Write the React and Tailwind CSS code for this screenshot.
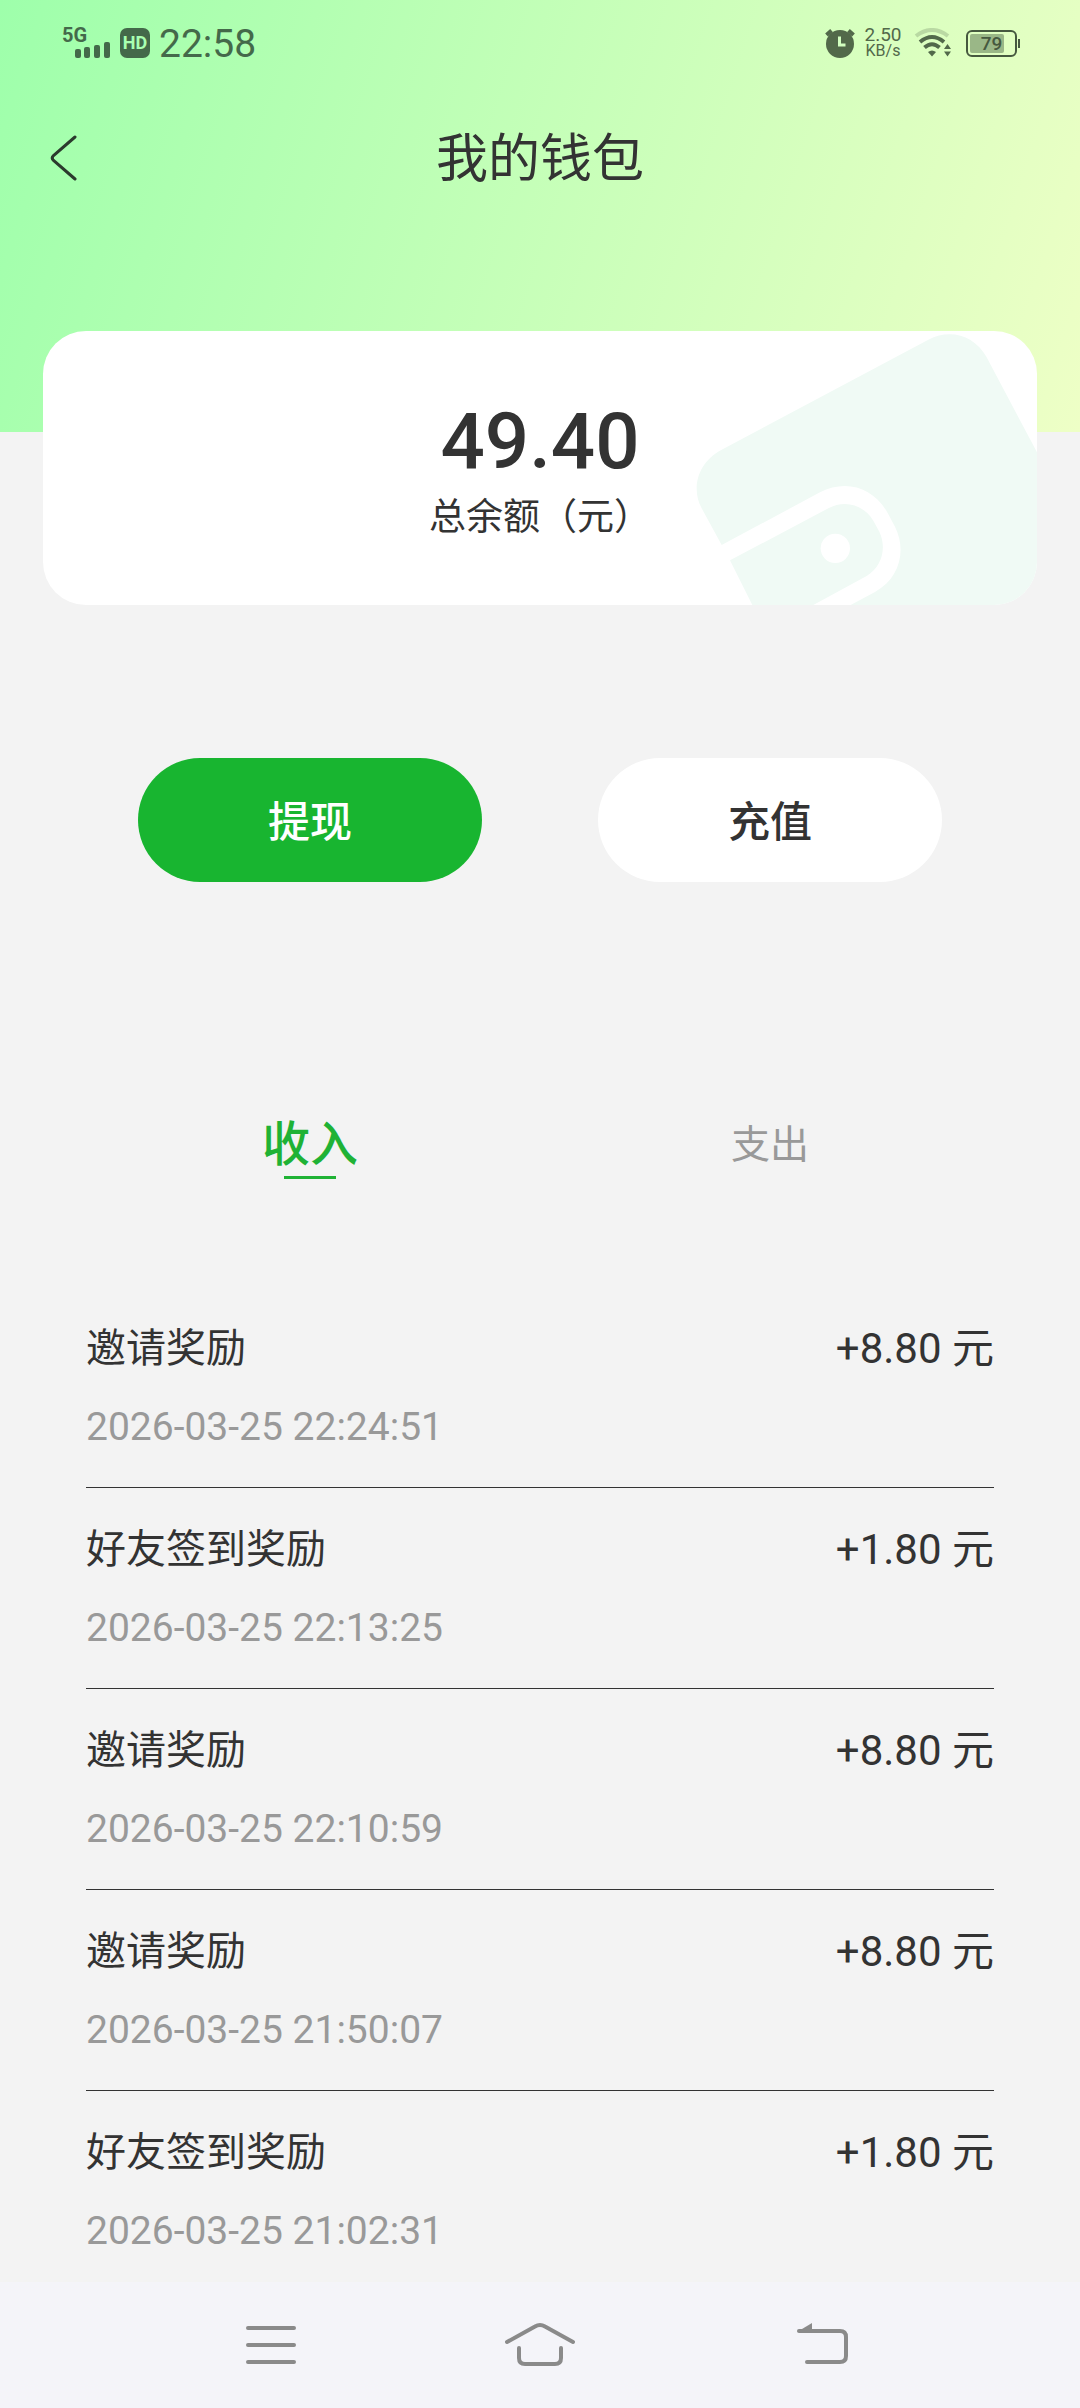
import { useState } from 'react'

const RECORDS = [
  { title: '邀请奖励', time: '2026-03-25 22:24:51', amount: '+8.80' },
  { title: '好友签到奖励', time: '2026-03-25 22:13:25', amount: '+1.80' },
  { title: '邀请奖励', time: '2026-03-25 22:10:59', amount: '+8.80' },
  { title: '邀请奖励', time: '2026-03-25 21:50:07', amount: '+8.80' },
  { title: '好友签到奖励', time: '2026-03-25 21:02:31', amount: '+1.80' },
]

const TABS = [
  { id: 'income', label: '收入' },
  { id: 'expense', label: '支出' },
]

function StatusBar() {
  return (
    <div className="flex h-[86px] items-center justify-between pl-[62px] pr-[60px] text-[#44694a]">
      <div className="flex items-center">
        <div className="flex h-[30px] w-12 flex-col">
          <span className="text-[20px] leading-[14px] font-bold">5G</span>
          <svg className="self-end" width="36" height="16" viewBox="0 0 36 16" fill="currentColor">
            <rect x="1" y="7" width="6" height="9" rx="2" />
            <rect x="10" y="5" width="6" height="11" rx="2" />
            <rect x="20" y="3" width="6" height="13" rx="2" />
            <rect x="30" y="0" width="6" height="16" rx="2" />
          </svg>
        </div>
        <span className="ml-[10px] flex h-[30px] w-[30px] items-center justify-center rounded-[7px] bg-[#44694a] text-[18px] leading-none font-bold text-[#a9ffb1]">
          HD
        </span>
        <span className="ml-[9px] pt-[2px] text-[39px] leading-[40px]">22:58</span>
      </div>

      <div className="flex items-center text-[#52694a]">
        <svg width="30" height="30" viewBox="0 0 30 30" fill="none">
          <circle cx="15" cy="16" r="14" fill="currentColor" />
          <path d="M1.500 7 6.500 2.500M28.500 7 23.500 2.500" stroke="currentColor" strokeWidth="4" />
          <path d="M14.500 8.500v8.500h6" stroke="#d2ffc0" strokeWidth="3" />
        </svg>
        <div className="ml-[8px] flex w-10 flex-col items-center">
          <span className="text-[19px] leading-[16px]">2.50</span>
          <span className="text-[16px] leading-[16px]">KB/s</span>
        </div>
        <svg className="ml-[11px]" width="38" height="30" viewBox="0 0 38 30" fill="none">
          <path d="M2 8Q18-4 34 8" stroke="currentColor" strokeOpacity=".25" strokeWidth="4" />
          <path d="M6 14Q18 4 30 14" stroke="currentColor" strokeWidth="4" />
          <path d="M10.500 19.500Q18 13 25.500 19.500" stroke="currentColor" strokeWidth="4" />
          <path d="M14 24Q18 21 22 24L18 28.500Z" fill="currentColor" />
          <path d="M30 21 33.500 16 37 21ZM30 23.500 33.500 28.500 37 23.500Z" fill="currentColor" />
        </svg>
        <div className="ml-[14px] flex items-center text-[#46593f]">
          <div className="relative flex h-[27px] w-[51px] items-center justify-center rounded-[6px] border-2 border-[#46593f]">
            <span className="absolute top-[2px] bottom-[2px] left-[2px] w-[34px] rounded-[2px] bg-[#9ab787]" />
            <span className="relative text-[19px] leading-none font-medium">79</span>
          </div>
          <span className="ml-px h-[9px] w-[2px] bg-[#46593f]" />
        </div>
      </div>
    </div>
  )
}

function TitleBar() {
  return (
    <div className="relative flex h-36 items-center justify-center">
      <button aria-label="返回" className="absolute left-[44px] flex h-16 w-10 items-center justify-center">
        <svg width="40" height="46" viewBox="0 0 40 46" fill="none">
          <path d="M31 2 9.500 20.500Q7 23 9.500 25.500L31 44" stroke="#2b3a2d" strokeWidth="3" strokeLinecap="round" />
        </svg>
      </button>
      <h1 className="pt-1 text-[52px] leading-[64px] text-[#333]">我的钱包</h1>
    </div>
  )
}

function BalanceCard() {
  return (
    <section className="relative mx-[43px] -mt-[101px] flex flex-col items-center gap-4 overflow-hidden rounded-[43px] bg-white pt-[71px] pb-[67px] text-[#333]">
      <svg className="absolute top-0 right-0" width="347" height="274" viewBox="150 93 1041 822">
        <path
          d="M245 735 185 625C155 570 168 490 245 449L865 119C930 85 1003 105 1040 172L1191 457V915H632L705 876C780 835 800 750 765 680L745 643C705 565 620 535 540 577Z"
          fill="#f0faf5"
        />
        <path
          d="M270 781 565 625C615 598 672 615 700 662L718 695C740 740 728 800 680 828L520 915H337Z"
          fill="#f0faf5"
        />
        <circle cx="586" cy="745" r="44" fill="#fff" />
      </svg>
      <p className="relative text-[78px] leading-[80px] font-medium">49.40</p>
      <p className="relative text-[37px] leading-[40px]">总余额（元）</p>
    </section>
  )
}

function RecordRow({ record }) {
  return (
    <li className="flex flex-col gap-[38px] border-b border-[#333] pt-[42px] pb-10">
      <div className="flex justify-between leading-[40px] text-[#333]">
        <span className="text-[40px]">{record.title}</span>
        <span className="text-[42px]">{record.amount} 元</span>
      </div>
      <time className="text-[39px] leading-[40px] text-[#999]">{record.time}</time>
    </li>
  )
}

function NavBar() {
  return (
    <nav className="grid h-[126px] shrink-0 grid-cols-3 items-center justify-items-center bg-[#f4f4f9] px-[136px] text-[#8a8a8a]">
      <button aria-label="菜单">
        <svg width="80" height="50" viewBox="0 0 80 50" stroke="currentColor" strokeWidth="4" strokeLinecap="round">
          <path d="M17 8h46M17 25h46M17 42h46" />
        </svg>
      </button>
      <button aria-label="主页">
        <svg width="80" height="50" viewBox="0 0 80 50" fill="none" stroke="currentColor" strokeWidth="4" strokeLinecap="round">
          <path d="M7 22 35 6.500Q40 3.500 45 6.500L73 22" />
          <path d="M19 28v10Q19 44 25 44H55Q61 44 61 38V28" />
        </svg>
      </button>
      <button aria-label="返回上一级">
        <svg width="80" height="50" viewBox="0 0 80 50" fill="none" stroke="currentColor" strokeWidth="4" strokeLinecap="round">
          <path d="M30 11H71Q77 11 77 17V36Q77 42 71 42H38" />
          <path d="M28 12 43 3V12Z" fill="currentColor" stroke="none" />
        </svg>
      </button>
    </nav>
  )
}

export default function App() {
  const [tab, setTab] = useState('income')

  return (
    <div className="flex h-screen flex-col bg-[#f3f3f3] font-[Roboto,'Noto_Sans_CJK_SC',sans-serif]">
      <main className="flex-1 overflow-y-auto [scrollbar-width:none]">
        <header className="bg-[linear-gradient(108deg,#9effab,#eeffc6)] pb-[202px]">
          <StatusBar />
          <TitleBar />
        </header>

        <BalanceCard />

        <div className="mt-[153px] grid grid-cols-2 justify-items-center px-20">
          <button className="h-[124px] w-[344px] rounded-full bg-[#18b530] pt-1 text-[42px] font-medium text-white">提现</button>
          <button className="h-[124px] w-[344px] rounded-full bg-white pt-1 text-[42px] font-medium text-[#333]">充值</button>
        </div>

        <div role="tablist" className="mt-[228px] grid grid-cols-2 items-start px-20">
          {TABS.map((t) => (
            <button
              key={t.id}
              role="tab"
              aria-selected={tab === t.id}
              onClick={() => setTab(t.id)}
              className={`flex flex-col items-center pt-1 leading-[62px] ${
                tab === t.id ? 'text-[48px] font-medium text-[#1fb235]' : 'text-[39px] text-[#999]'
              }`}
            >
              {t.label}
              {tab === t.id && <span className="h-[3px] w-[52px] bg-[#1fb235]" />}
            </button>
          ))}
        </div>

        <ul className="mx-[86px] mt-[108px]">
          {tab === 'income' && RECORDS.map((r) => <RecordRow key={r.time} record={r} />)}
        </ul>
      </main>
      <NavBar />
    </div>
  )
}
